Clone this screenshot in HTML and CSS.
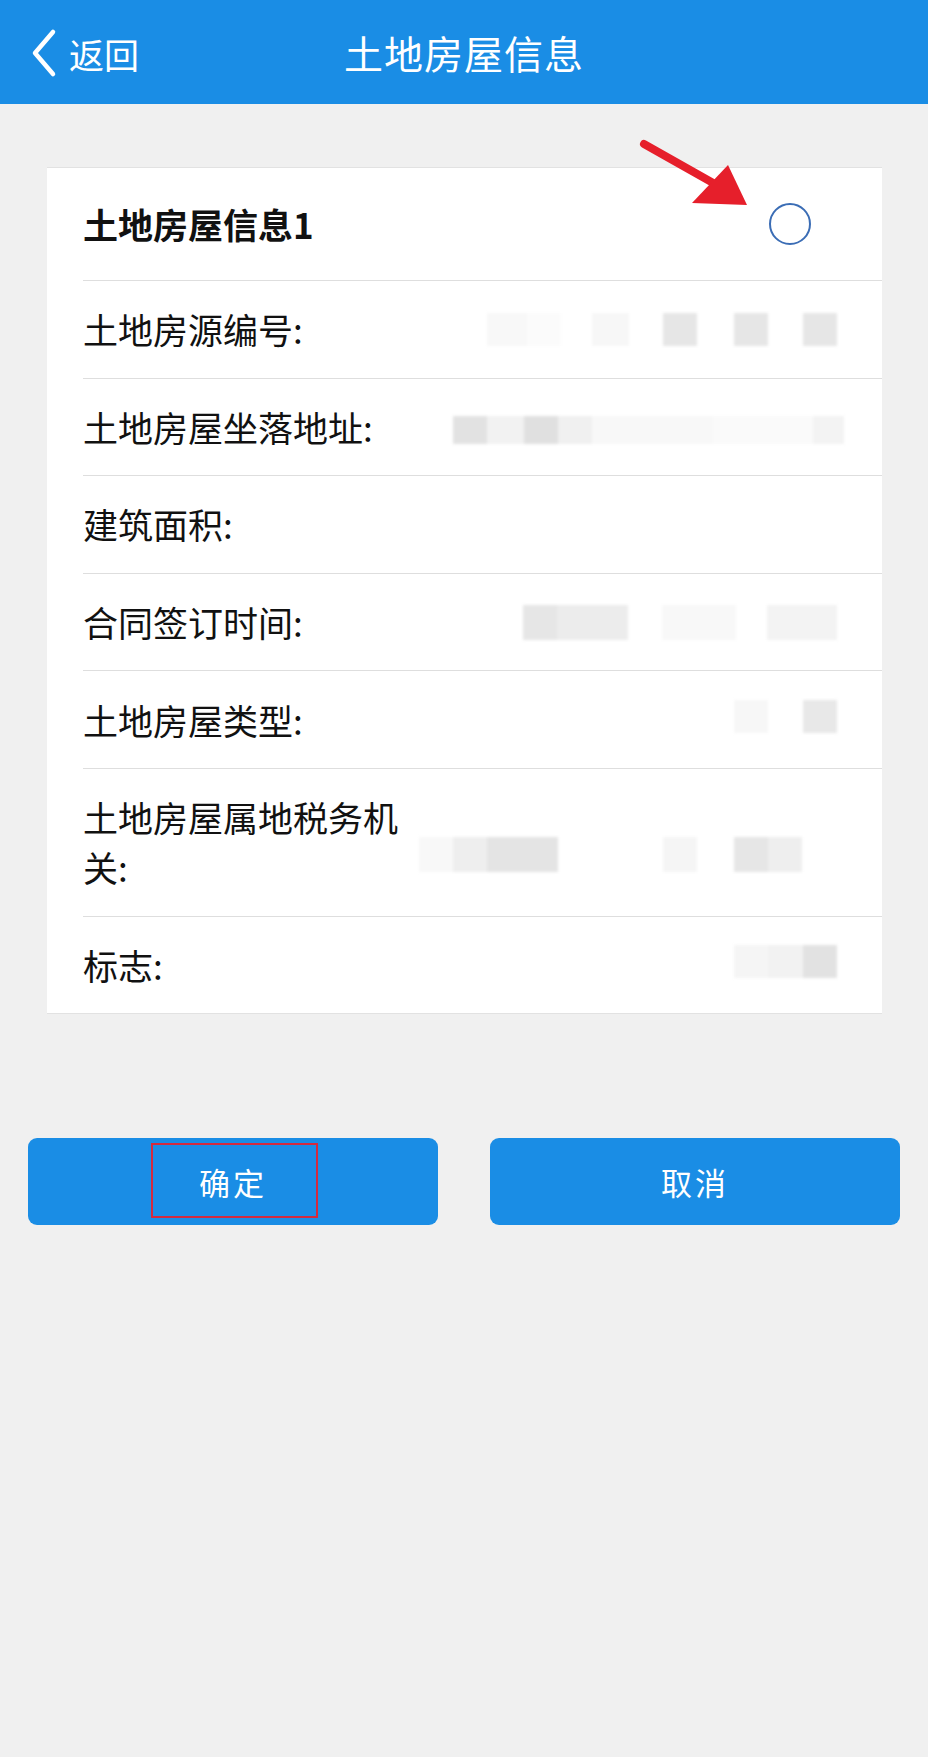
FILE: index.html
```html
<!DOCTYPE html>
<html lang="zh-CN">
<head>
    <meta charset="UTF-8">
    <meta name="viewport" content="width=device-width, initial-scale=1.0">
    <title>土地房屋信息</title>
    <link rel="stylesheet" href="styles.css">
</head>
<body>
    <header class="topbar">
        <a class="back" href="#">
            <svg class="chevron" width="28" height="50" viewBox="0 0 28 50">
                <polyline points="23,4 5,25 23,46" fill="none" stroke="#fff" stroke-width="4.5" stroke-linecap="round" stroke-linejoin="round"/>
            </svg>
            <span>返回</span>
        </a>
        <h1 class="title">土地房屋信息</h1>
        <span></span>
    </header>

    <main>
        <div class="card">
            <div class="card-head">
                <span class="card-title">土地房屋信息1</span>
                <span class="radio"></span>
                <!-- annotation arrow -->
                <svg class="arrow" width="116" height="76" viewBox="0 0 116 76">
                    <line x1="8" y1="8" x2="86" y2="52" stroke="#e61f2b" stroke-width="8" stroke-linecap="round"/>
                    <polygon points="111,69 56,67 92,29" fill="#e61f2b"/>
                </svg>
            </div>

            <div class="row">
                <span class="label">土地房源编号:</span>
                <span class="value v1"></span>
            </div>
            <div class="row">
                <span class="label">土地房屋坐落地址:</span>
                <span class="value v2"></span>
            </div>
            <div class="row">
                <span class="label">建筑面积:</span>
            </div>
            <div class="row">
                <span class="label">合同签订时间:</span>
                <span class="value v4"></span>
            </div>
            <div class="row">
                <span class="label">土地房屋类型:</span>
                <span class="value v5"></span>
            </div>
            <div class="row">
                <span class="label">土地房屋属地税务机关:</span>
                <span class="value v6"></span>
            </div>
            <div class="row">
                <span class="label">标志:</span>
                <span class="value v7"></span>
            </div>
        </div>

        <div class="actions">
            <button class="btn ok">确定<span class="mark"></span></button>
            <button class="btn">取消</button>
        </div>
    </main>
</body>
</html>
```

FILE: styles.css
```css
/* Basic Styles */
body {
    margin: 0;
    background-color: #f0f0f0;
    font-family: "Noto Sans CJK SC", "Noto Sans", sans-serif;
    color: #111;
    min-height: 1757px;
}

.topbar {
    background-color: #1a8de5;
    height: 104px;
    display: grid;
    grid-template-columns: 1fr auto 1fr;
    align-items: center;
    color: white;
}

.back {
    display: flex;
    align-items: center;
    gap: 11px;
    padding-left: 30px;
    color: white;
    text-decoration: none;
    font-size: 35px;
    margin-top: 2px;
}

.title {
    margin: 0;
    font-size: 39px;
    font-weight: normal;
    letter-spacing: 1px;
}

/* Card */
.card {
    background-color: #ffffff;
    margin: 63px 46px 0 47px;
    border-top: 1px solid #e2e2e2;
    border-bottom: 1px solid #e2e2e2;
}

.card-head {
    position: relative;
    display: flex;
    align-items: center;
    justify-content: space-between;
    margin-left: 36px;
    padding: 31px 71px 31px 0;
    line-height: 50px;
    border-bottom: 1px solid #dedede;
}

.card-title {
    font-size: 35px;
    font-weight: bold;
}

.radio {
    width: 38px;
    height: 38px;
    border: 2.5px solid #3b6db5;
    border-radius: 50%;
}

.arrow {
    position: absolute;
    left: 553px;
    top: -32px;
}

.row {
    display: flex;
    align-items: center;
    margin-left: 36px;
    padding: 23.3px 45px 23.3px 0;
    line-height: 50px;
    border-bottom: 1px solid #dedede;
}

.row:last-child {
    border-bottom: none;
}

.label {
    font-size: 35px;
    max-width: 325px;
}

/* blurred values */
.value {
    margin-left: auto;
    height: 33px;
    filter: blur(1.5px);
}

.v1 {
    width: 350px;
    background: linear-gradient(to right,
        #f8f8f8 0 40px, #fbfbfb 40px 74px, #fff 74px 105px, #f7f7f7 105px 142px,
        #fff 142px 176px, #e6e6e6 176px 210px, #fff 210px 247px, #e6e6e6 247px 281px,
        #fff 281px 316px, #e6e6e6 316px 350px);
}

.v2 {
    width: 391px;
    height: 28px;
    margin-right: -7px;
    margin-top: 6px;
    background: linear-gradient(to right,
        #e2e2e2 0 34px, #f2f2f2 34px 71px, #e0e0e0 71px 105px, #f0f0f0 105px 139px,
        #f8f8f8 139px 260px, #fafafa 260px 360px, #f3f3f3 360px 391px);
}

.v4 {
    width: 314px;
    height: 35px;
    background: linear-gradient(to right,
        #e6e6e6 0 34px, #ececec 34px 105px, #fff 105px 139px, #f8f8f8 139px 213px,
        #fff 213px 244px, #f3f3f3 244px 314px);
}

.v5 {
    width: 103px;
    margin-top: -6px;
    background: linear-gradient(to right,
        #f7f7f7 0 34px, #fff 34px 69px, #e8e8e8 69px 103px);
}

.v6 {
    width: 418px;
    height: 35px;
    margin-top: 24px;
    background: linear-gradient(to right,
        #f8f8f8 0 34px, #eeeeee 34px 68px, #e4e4e4 68px 139px, #fff 139px 244px,
        #f5f5f5 244px 278px, #fff 278px 315px, #e6e6e6 315px 349px, #eeeeee 349px 383px,
        #fff 383px 418px);
}

.v7 {
    width: 103px;
    margin-top: -6px;
    background: linear-gradient(to right,
        #f5f5f5 0 34px, #f2f2f2 34px 69px, #e2e2e2 69px 103px);
}

/* Buttons */
.actions {
    display: grid;
    grid-template-columns: 1fr 1fr;
    gap: 52px;
    margin: 124px 28px 0;
}

.btn {
    position: relative;
    height: 87px;
    border: none;
    border-radius: 9px;
    background-color: #1a8de5;
    color: white;
    font-family: "Noto Sans CJK SC", "Noto Sans", sans-serif;
    font-size: 31px;
    letter-spacing: 3px;
}

.mark {
    position: absolute;
    left: 123px;
    top: 5px;
    width: 163px;
    height: 71px;
    border: 2px solid #d42a3e;
}
```
